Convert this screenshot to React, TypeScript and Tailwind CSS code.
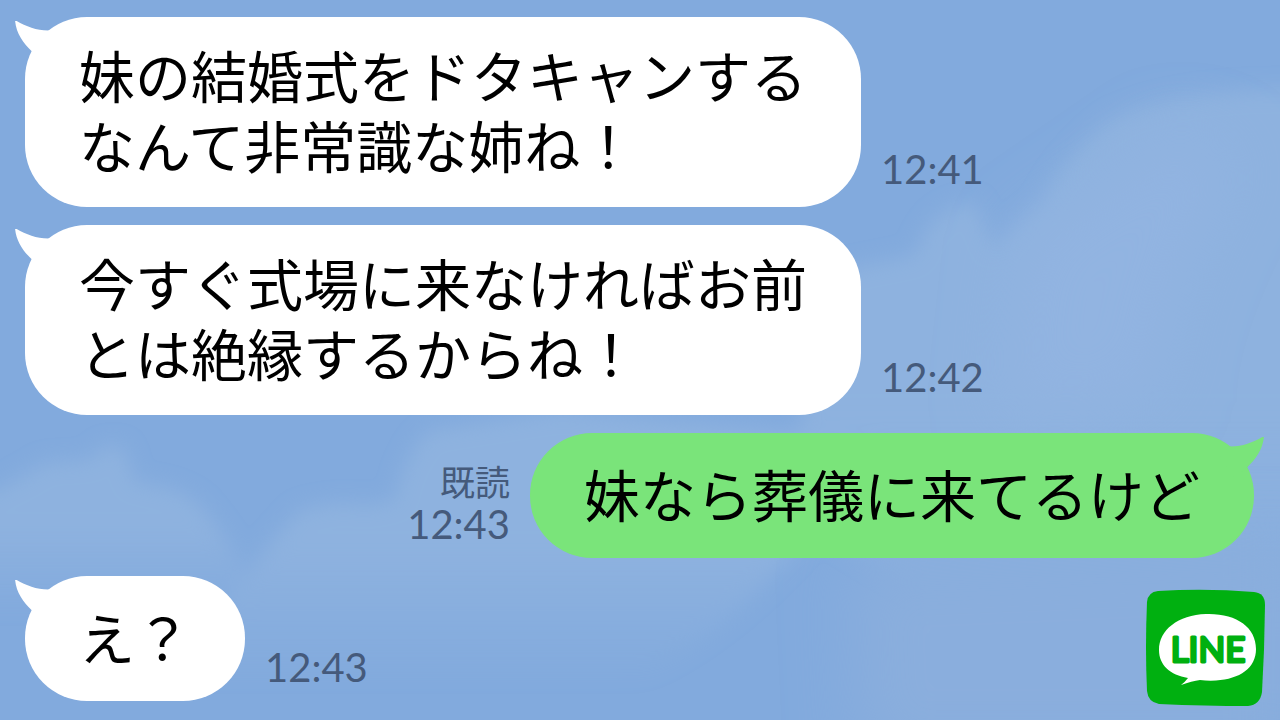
import clsx from "clsx";

type Message = {
  id: number;
  from: "me" | "them";
  lines: string[];
  time: string;
  read?: boolean;
};

const messages: Message[] = [
  {
    id: 1,
    from: "them",
    lines: ["妹の結婚式をドタキャンする", "なんて非常識な姉ね！"],
    time: "12:41",
  },
  {
    id: 2,
    from: "them",
    lines: ["今すぐ式場に来なければお前", "とは絶縁するからね！"],
    time: "12:42",
  },
  {
    id: 3,
    from: "me",
    lines: ["妹なら葬儀に来てるけど"],
    time: "12:43",
    read: true,
  },
  {
    id: 4,
    from: "them",
    lines: ["え？"],
    time: "12:43",
  },
];

function Sky() {
  return (
    <svg
      className="absolute inset-0 -z-10 h-full w-full"
      viewBox="0 0 1280 720"
      preserveAspectRatio="none"
      aria-hidden="true"
    >
      <defs>
        <filter id="soft" x="-20%" y="-20%" width="140%" height="140%">
          <feGaussianBlur stdDeviation="10" />
        </filter>
        <filter id="softer" x="-40%" y="-60%" width="180%" height="220%">
          <feGaussianBlur stdDeviation="32" />
        </filter>
        <linearGradient id="fade" x1="0" y1="0" x2="0" y2="1">
          <stop offset="0.5" stopColor="#8eb2df" />
          <stop offset="1" stopColor="#8eb2df" stopOpacity="0" />
        </linearGradient>
      </defs>
      <rect width="1280" height="720" fill="#82aadd" />
      <g filter="url(#soft)">
        <path
          d="M-30 500 Q20 480 45 462 L90 460 Q110 436 125 450 L135 482 Q180 486 200 505 Q222 530 240 560 L250 610 H-30Z"
          fill="url(#fade)"
        />
        <path
          d="M225 600 Q270 540 300 510 Q340 498 365 505 L395 500 Q405 450 430 430 L560 410 L880 440 Q780 600 640 680 H200Z"
          fill="url(#fade)"
        />
        <path
          d="M840 270 L915 255 Q930 205 975 202 L995 250 Q1010 225 1040 205 Q1060 160 1110 120 Q1180 85 1310 90 V720 Q980 660 780 500Z"
          fill="url(#fade)"
        />
      </g>
      <g fill="#8aaedd" filter="url(#softer)">
        <path d="M850 560 L1300 540 V760 H860Z" />
        <path d="M1020 240 Q1080 200 1180 130 L1240 160 Q1160 300 1160 400 L1000 420Z" fill="#92b4e1" />
      </g>
    </svg>
  );
}

function Tail({ mine }: { mine: boolean }) {
  return (
    <svg
      className={clsx(
        "absolute top-1 h-12 w-12",
        mine ? "-right-2.5 -scale-x-100 text-[#7ae47a]" : "-left-2.5 text-white",
      )}
      viewBox="0 0 48 48"
      fill="currentColor"
      aria-hidden="true"
    >
      <path d="M0 -1 C10 5 22 10 35 9.5 L44 20 L30 40 L17 30.5 C8 22 1 12 0 -1Z" />
    </svg>
  );
}

function Bubble({ message }: { message: Message }) {
  const mine = message.from === "me";

  return (
    <li className={clsx("flex items-end gap-5", mine && "flex-row-reverse")}>
      <div
        className={clsx(
          "relative flex min-h-[125px] items-center rounded-[62px] px-[54px] pt-[27px] pb-[23px]",
          mine ? "bg-[#7ae47a]" : "bg-white",
        )}
      >
        <Tail mine={mine} />
        <p className="relative text-[56px] leading-[70px] whitespace-nowrap text-black">
          {message.lines.map((line) => (
            <span key={line} className="block">
              {line}
            </span>
          ))}
        </p>
      </div>
      <div
        className={clsx(
          "flex flex-col font-['Lato','Noto_Sans_CJK_JP',sans-serif] text-[#455a7b]",
          mine ? "items-end" : "items-start",
          message.lines.length > 1 ? "pb-4" : "pb-3",
        )}
      >
        {message.read && <span className="text-[35px] leading-10">既読</span>}
        <time className="text-[40px] leading-[44px]">{message.time}</time>
      </div>
    </li>
  );
}

function LineLogo() {
  return (
    <svg
      className="absolute right-3.5 bottom-3 h-[120px] w-[120px]"
      viewBox="0 0 120 120"
      role="img"
      aria-label="LINE"
    >
      <path
        d="M12 3 Q60 0 108 4 Q119 5 119 17 L118 62 L116 104 Q114 117 102 118 Q60 118 13 116 Q2 114 1 103 Q-1 60 1 14 Q2 4 12 3Z"
        fill="#00b010"
      />
      <path
        d="M60 26 C90 25 110 39 110 61 C110 80 94 91 70 92.5 Q62 93 54 92 Q46 93 35 97 Q39 94 42 90 C24 87 13 77 13 62 C13 42 32 27 60 26Z"
        fill="#fff"
      />
      <text
        x="62"
        y="74"
        textAnchor="middle"
        fill="#00b010"
        stroke="#00b010"
        strokeWidth="3"
        strokeLinejoin="round"
        className="font-['Lato',sans-serif] text-[35px] font-normal"
      >
        LINE
      </text>
    </svg>
  );
}

export default function App() {
  return (
    <main
      lang="ja"
      className="relative isolate min-h-screen overflow-hidden pt-[17px] pr-[26px] pb-[19px] pl-[25px] font-['Liberation_Sans','Noto_Sans_CJK_JP',sans-serif]"
    >
      <Sky />
      <ul className="flex flex-col gap-[18px]">
        {messages.map((message) => (
          <Bubble key={message.id} message={message} />
        ))}
      </ul>
      <LineLogo />
    </main>
  );
}
